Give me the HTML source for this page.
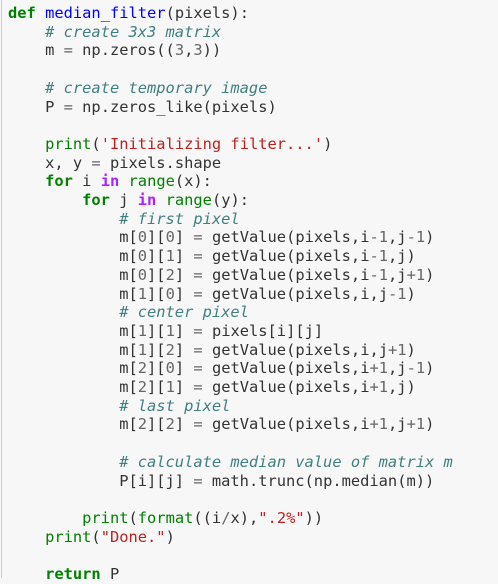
<!DOCTYPE html>
<html><head><meta charset="utf-8"><style>
html,body{margin:0;padding:0;background:#f7f7f7;}
body{width:498px;height:578px;overflow:hidden;position:relative;}
.bl{position:absolute;left:1px;top:0;width:1px;height:578px;background:#cfcfcf;}
pre{margin:0;position:absolute;left:8px;top:4px;font-family:"DejaVu Sans Mono","Liberation Mono",monospace;font-size:15.4px;line-height:18.7px;color:#333;}
.k{color:#008000;font-weight:bold}
.f{color:#0000ff}
.c{color:#408080;font-style:italic}
.s{color:#ba2121}
.n{color:#666}
.o{color:#aa22ff;font-weight:bold}
.b{color:#008000}
</style></head><body><div class="bl"></div><pre><span class="k">def</span> <span class="f">median_filter</span>(pixels):
    <span class="c"># create 3x3 matrix</span>
    m <span class="n">=</span> np.zeros((<span class="n">3</span>,<span class="n">3</span>))

    <span class="c"># create temporary image</span>
    P <span class="n">=</span> np.zeros_like(pixels)

    <span class="b">print</span>(<span class="s">'Initializing filter...'</span>)
    x, y <span class="n">=</span> pixels.shape
    <span class="k">for</span> i <span class="o">in</span> <span class="b">range</span>(x):
        <span class="k">for</span> j <span class="o">in</span> <span class="b">range</span>(y):
            <span class="c"># first pixel</span>
            m[<span class="n">0</span>][<span class="n">0</span>] <span class="n">=</span> getValue(pixels,i<span class="n">-1</span>,j<span class="n">-1</span>)
            m[<span class="n">0</span>][<span class="n">1</span>] <span class="n">=</span> getValue(pixels,i<span class="n">-1</span>,j)
            m[<span class="n">0</span>][<span class="n">2</span>] <span class="n">=</span> getValue(pixels,i<span class="n">-1</span>,j<span class="n">+1</span>)
            m[<span class="n">1</span>][<span class="n">0</span>] <span class="n">=</span> getValue(pixels,i,j<span class="n">-1</span>)
            <span class="c"># center pixel</span>
            m[<span class="n">1</span>][<span class="n">1</span>] <span class="n">=</span> pixels[i][j]
            m[<span class="n">1</span>][<span class="n">2</span>] <span class="n">=</span> getValue(pixels,i,j<span class="n">+1</span>)
            m[<span class="n">2</span>][<span class="n">0</span>] <span class="n">=</span> getValue(pixels,i<span class="n">+1</span>,j<span class="n">-1</span>)
            m[<span class="n">2</span>][<span class="n">1</span>] <span class="n">=</span> getValue(pixels,i<span class="n">+1</span>,j)
            <span class="c"># last pixel</span>
            m[<span class="n">2</span>][<span class="n">2</span>] <span class="n">=</span> getValue(pixels,i<span class="n">+1</span>,j<span class="n">+1</span>)

            <span class="c"># calculate median value of matrix m</span>
            P[i][j] <span class="n">=</span> math.trunc(np.median(m))

        <span class="b">print</span>(<span class="b">format</span>((i<span class="n">/</span>x),<span class="s">".2%"</span>))
    <span class="b">print</span>(<span class="s">"Done."</span>)

    <span class="k">return</span> P</pre></body></html>
